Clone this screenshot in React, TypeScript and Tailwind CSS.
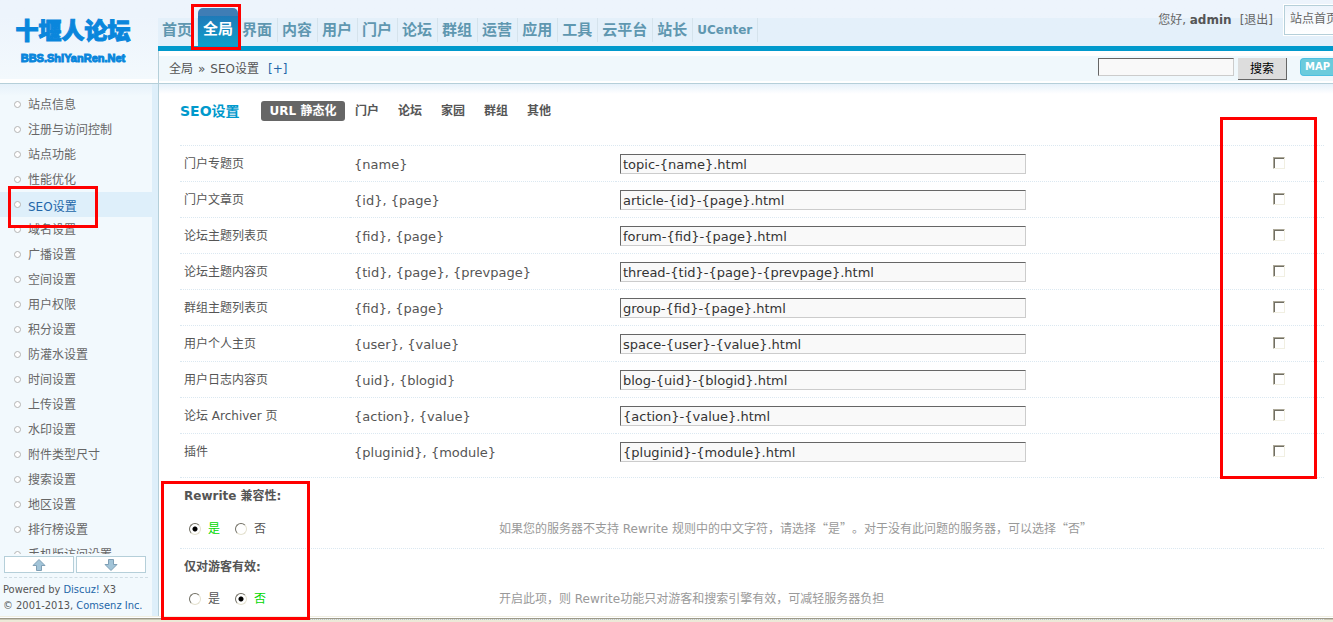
import { useState } from 'react';

const navItems = ['首页', '全局', '界面', '内容', '用户', '门户', '论坛', '群组', '运营', '应用', '工具', '云平台', '站长', 'UCenter'];

const menuItems = [
  '站点信息', '注册与访问控制', '站点功能', '性能优化', 'SEO设置', '域名设置', '广播设置',
  '空间设置', '用户权限', '积分设置', '防灌水设置', '时间设置', '上传设置', '水印设置',
  '附件类型尺寸', '搜索设置', '地区设置', '排行榜设置', '手机版访问设置',
];

const tabs = ['URL 静态化', '门户', '论坛', '家园', '群组', '其他'];

const rules = [
  { name: '门户专题页', vars: '{name}', value: 'topic-{name}.html' },
  { name: '门户文章页', vars: '{id}, {page}', value: 'article-{id}-{page}.html' },
  { name: '论坛主题列表页', vars: '{fid}, {page}', value: 'forum-{fid}-{page}.html' },
  { name: '论坛主题内容页', vars: '{tid}, {page}, {prevpage}', value: 'thread-{tid}-{page}-{prevpage}.html' },
  { name: '群组主题列表页', vars: '{fid}, {page}', value: 'group-{fid}-{page}.html' },
  { name: '用户个人主页', vars: '{user}, {value}', value: 'space-{user}-{value}.html' },
  { name: '用户日志内容页', vars: '{uid}, {blogid}', value: 'blog-{uid}-{blogid}.html' },
  { name: '论坛 Archiver 页', vars: '{action}, {value}', value: '{action}-{value}.html' },
  { name: '插件', vars: '{pluginid}, {module}', value: '{pluginid}-{module}.html' },
];

const options = [
  {
    id: 'compat',
    title: 'Rewrite 兼容性:',
    initial: true,
    tip: '如果您的服务器不支持 Rewrite 规则中的中文字符，请选择“是”。对于没有此问题的服务器，可以选择“否”',
  },
  {
    id: 'guest',
    title: '仅对游客有效:',
    initial: false,
    tip: '开启此项，则 Rewrite功能只对游客和搜索引擎有效，可减轻服务器负担',
  },
];

const radioClass =
  'size-3 shrink-0 appearance-none rounded-full border border-t-[#716f64] border-l-[#716f64] border-r-[#e4e1cf] border-b-[#e4e1cf] bg-white checked:bg-[radial-gradient(circle,#000_0_2px,#fff_3px)]';

// Red frame laid over a region to call attention to it
function Marker({ className }: { className: string }) {
  return <div className={`pointer-events-none absolute z-10 border-3 border-[#ff0000] ${className}`} />;
}

function Arrow({ down = false }: { down?: boolean }) {
  return (
    <svg width="14" height="12" viewBox="0 0 14 12" className={down ? 'rotate-180' : ''}>
      <path d="M7 .5 L13 6.5 H9.5 V11.5 H4.5 V6.5 H1 Z" fill="#a2c4d8" stroke="#7f9fb5" />
    </svg>
  );
}

function Logo() {
  return (
    <a href="#" className="flex h-[79px] flex-col items-center pt-2.5 pr-3 text-[#0a86dc]">
      <span className="text-[23px] leading-[42px] font-black [-webkit-text-stroke:1px_#0a86dc]">十堰人论坛</span>
      <span className="font-['Liberation_Sans'] text-[11px] leading-[12px] font-bold [-webkit-text-stroke:1px_#0a86dc]">BBS.ShiYanRen.Net</span>
    </a>
  );
}

function Sidebar() {
  return (
    <aside className="flex w-[158px] shrink-0 flex-col">
      <div className="h-[84px] shrink-0 border-b border-[#b5cfd9] bg-white">
        <div className="bg-linear-to-b from-[#edf4fc] from-20% to-[#f3f9fd]">
          <Logo />
        </div>
      </div>
      <div className="flex min-h-0 flex-1 flex-col border-r-6 border-[#deeffa] bg-[#f2f9fd]">
        <ul className="relative min-h-0 flex-1 overflow-hidden bg-linear-to-b from-[#e6f1fa] to-transparent to-[12px] pt-2">
          {menuItems.map(item => {
            const active = item === 'SEO设置';
            return (
              <li key={item} className={`flex h-[25px] items-center pl-[14px] ${active ? 'bg-[#deeffa]' : ''}`}>
                <span className="size-[7px] rounded-full border border-[#b4b4b4] bg-white" />
                <a href="#" className={`pl-[7px] ${active ? 'pt-1 text-[#2366a8]' : 'text-[#666]'}`}>{item}</a>
              </li>
            );
          })}
          <Marker className="top-[102px] left-2 h-[42px] w-[90px]" />
        </ul>
        <div className="flex gap-0.5 px-1 pt-0.5">
          <button aria-label="向上滚动" className="flex h-[17px] w-[70px] items-center justify-center border border-[#b5cfd9] bg-white"><Arrow /></button>
          <button aria-label="向下滚动" className="flex h-[17px] w-[70px] items-center justify-center border border-[#b5cfd9] bg-white"><Arrow down /></button>
        </div>
        <div className="mx-1 mt-1 border-t border-dashed border-[#d0dde4]" />
        <div className="pt-1 pl-[3px] font-['DejaVu_Sans_Condensed','DejaVu_Sans',sans-serif] text-[11px] leading-4 whitespace-nowrap">
          <p>Powered by <a href="#" className="text-[#2366a8]">Discuz!</a> X3</p>
          <p>© 2001-2013, <a href="#" className="text-[#2366a8]">Comsenz Inc.</a></p>
        </div>
        <div className="h-0.5" />
      </div>
    </aside>
  );
}

function Header() {
  return (
    <header>
      <div className="flex h-[51px] justify-between border-b-5 border-[#0099cc] bg-linear-to-b from-[#edf4fc] from-[18px] to-[#e4f0fa] to-[18px]">
        <nav className="relative flex items-end">
          {navItems.map(item =>
            item === '全局' ? (
              <a key={item} href="#" className="h-[38px] w-10 rounded-t-[5px] bg-linear-to-b from-[#3f7db5] from-[8px] via-[#1e7ab8] via-[8px] to-[#0c9fcb] pl-[5px] text-[15px] leading-[42px] font-bold whitespace-nowrap text-white">
                {item}
              </a>
            ) : (
              <a
                key={item}
                href="#"
                className={`mb-1 h-6 border-r border-[#d5e3ec] pr-[5px] pl-1 leading-6 font-bold whitespace-nowrap text-[#5f97b0] ${item === 'UCenter' ? 'text-[12px]' : 'text-[15px]'}`}
              >
                {item}
              </a>
            ),
          )}
          <Marker className="top-1 left-[33px] h-[46px] w-[50px]" />
        </nav>
        <div className="flex whitespace-nowrap text-[#666]">
          <p className="pt-2.5 leading-5">
            您好, <b className="text-[#555]">admin</b>
          </p>
          <a href="#" className="pt-2.5 pr-2.5 pl-2 leading-5">[退出]</a>
          <button className="mt-1 h-8 w-[50px] overflow-hidden border-y border-l border-white bg-white">
            <span className="flex h-full items-center border border-r-0 border-[#b5cfd9] bg-linear-to-b from-[#edf4fc] to-white pb-0.5 pl-[5px]">站点首页</span>
          </button>
        </div>
      </div>

      <div className="border-b border-l border-[#b5cfd9] bg-white pt-[5px] pb-0.5">
        <div className="flex h-[25px] items-start justify-between bg-[#f0f8fc] pl-2.5">
          <p className="flex gap-[5px] pt-px leading-6">
            <span>全局</span>
            <span>»</span>
            <span>SEO设置</span>
            <a href="#" className="pl-1 text-[#2366a8]">[+]</a>
          </p>
          <form className="flex items-start pt-0.5" onSubmit={e => e.preventDefault()}>
            <input
              aria-label="搜索"
              className="h-[18px] w-[136px] border border-t-[#666] border-r-[#ccc] border-b-[#ccc] border-l-[#666] bg-[#f9f9f9] px-1"
            />
            <button className="ml-1 h-[22px] w-[49px] border-r border-b border-[#666] bg-[#ddd] text-black">搜索</button>
            <button type="button" className="ml-[13px] h-[18px] w-[33px] overflow-hidden rounded-l-[4px] border border-r-0 border-[#4dbfe0] bg-[#6bcbdc] pl-1 text-left text-[10px] leading-4 font-bold text-white">
              MAP
            </button>
          </form>
        </div>
      </div>
    </header>
  );
}

function RulesTable() {
  const [checked, setChecked] = useState<number[]>([]);
  const toggle = (i: number) =>
    setChecked(prev => (prev.includes(i) ? prev.filter(n => n !== i) : [...prev, i]));

  return (
    <div className="relative border-y border-dotted border-[#dbe8f1] pb-[7px]">
      <table className="w-full table-fixed border-separate border-spacing-0">
        <tbody>
          {rules.map(({ name, vars, value }, i) => (
            <tr key={name} className="h-9 align-top *:border-b *:border-dotted *:border-[#dbe8f1] last:*:border-b-0">
              <td className="w-[170px] pt-2 pl-1 leading-5">
                <label htmlFor={`rule-${i}`}>{name}</label>
              </td>
              <td className="w-[266px] pt-[9px] pl-1 text-[13px] leading-5">{vars}</td>
              <td className="pt-2 pl-1">
                <input
                  id={`rule-${i}`}
                  defaultValue={value}
                  className="block h-5 w-[406px] border border-t-[#666] border-r-[#ccc] border-b-[#ccc] border-l-[#666] bg-[#f9f9f9] px-0.5 text-[13px] text-[#333]"
                />
              </td>
              <td className="w-[51px] pt-[11px]">
                <input
                  type="checkbox"
                  aria-label={`${name} 可用`}
                  checked={checked.includes(i)}
                  onChange={() => toggle(i)}
                  className="block size-3 appearance-none border border-t-[#aca899] border-r-[#f1efe2] border-b-[#f1efe2] border-l-[#aca899] bg-white shadow-[inset_1px_1px_0_#716f64] checked:bg-[#716f64]"
                />
              </td>
            </tr>
          ))}
        </tbody>
      </table>
      <Marker className="-top-[29px] right-[7px] -bottom-0.5 w-[97px]" />
    </div>
  );
}

function OptionRow({ id, title, initial, tip }: (typeof options)[number]) {
  const [enabled, setEnabled] = useState(initial);

  return (
    <fieldset className="h-[71px] border-b border-dotted border-[#dbe8f1] pt-2 pl-1 last:border-b-0">
      <legend className="float-left w-full leading-5 font-bold">{title}</legend>
      <div className="clear-both flex items-center pt-3 pl-[5px] leading-5">
        <div className="flex w-[310px] gap-[15px]">
          <label className={`flex items-center gap-[7px] ${enabled ? 'text-[#00d800]' : ''}`}>
            <input type="radio" name={id} checked={enabled} onChange={() => setEnabled(true)} className={radioClass} />
            是
          </label>
          <label className={`flex items-center gap-[7px] ${enabled ? '' : 'text-[#00d800]'}`}>
            <input type="radio" name={id} checked={!enabled} onChange={() => setEnabled(false)} className={radioClass} />
            否
          </label>
        </div>
        <p className="whitespace-nowrap text-[#999] [text-spacing-trim:space-all]">
          {/* curly quotes take the full-width form of the Chinese font */}
          {tip.split(/([“”])/).map((part, i) =>
            i % 2 ? <span key={i} className="font-['Noto_Sans_CJK_SC']">{part}</span> : part,
          )}
        </p>
      </div>
    </fieldset>
  );
}

export default function App() {
  return (
    <div className="flex h-screen flex-col overflow-hidden bg-white font-['DejaVu_Sans','Noto_Sans_CJK_SC',sans-serif] text-[12px] text-[#555]">
      <div className="flex min-h-0 flex-1">
        <Sidebar />
        <div className="flex min-w-0 flex-1 flex-col">
          <Header />
          <main className="flex-1 border-l border-[#b5cfd9] bg-linear-to-b from-[#e6f1fa] to-white to-[10px] pt-[17px] pr-[9px] pl-[21px]">
            <div className="flex h-5 items-center">
              <h1 className="w-[81px] text-[14px] font-bold whitespace-nowrap text-[#0099cc]">SEO设置</h1>
              <div className="flex gap-[19px]">
                {tabs.map((tab, i) => (
                  <a
                    key={tab}
                    href="#"
                    className={`leading-5 font-bold ${i === 0 ? '-mr-[9px] w-[84px] rounded-[3px] bg-[#666] text-center text-white' : 'text-[#555]'}`}
                  >
                    {tab}
                  </a>
                ))}
              </div>
            </div>
            <div className="pt-6">
              <RulesTable />
            </div>
            <div className="relative">
              {options.map(option => (
                <OptionRow key={option.id} {...option} />
              ))}
              <Marker className="top-[3px] -left-[19px] h-[139px] w-[149px]" />
            </div>
          </main>
        </div>
      </div>
      <footer className="flex h-1.5 shrink-0 flex-col border-t border-[#f1efe2] bg-[#ece9d8]">
        <div className="h-px bg-white" />
        <div className="h-px bg-[#9c9989]" />
        <div className="h-px bg-[#c9c6b5]" />
      </footer>
    </div>
  );
}
